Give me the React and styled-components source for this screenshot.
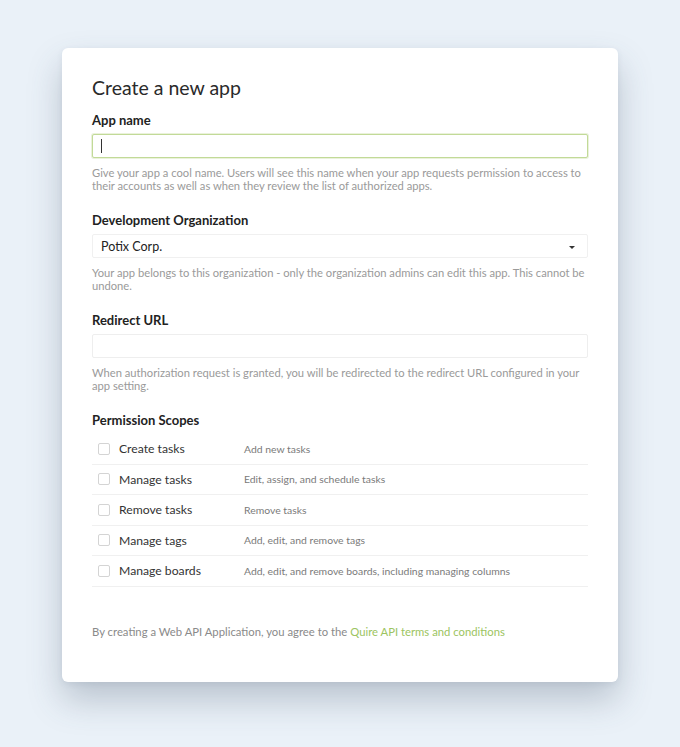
import React from 'react';
import styled, { createGlobalStyle } from 'styled-components';

const scopes = [
  { name: 'Create tasks', desc: 'Add new tasks' },
  { name: 'Manage tasks', desc: 'Edit, assign, and schedule tasks' },
  { name: 'Remove tasks', desc: 'Remove tasks' },
  { name: 'Manage tags', desc: 'Add, edit, and remove tags' },
  { name: 'Manage boards', desc: 'Add, edit, and remove boards, including managing columns' },
];

export default function App() {
  return (
    <>
      <GlobalStyle />
      <Page>
        <Card>
          <Title>Create a new app</Title>

          <Field>
            <Label htmlFor="appName">App name</Label>
            <InputWrap>
              <TextInput id="appName" type="text" $focused />
              <Caret />
            </InputWrap>
            <Help>
              Give your app a cool name. Users will see this name when your app requests permission to access to
              their accounts as well as when they review the list of authorized apps.
            </Help>
          </Field>

          <Field>
            <Label>Development Organization</Label>
            <Select>
              <span>Potix Corp.</span>
              <Arrow />
            </Select>
            <Help>
              Your app belongs to this organization - only the organization admins can edit this app. This cannot be
              undone.
            </Help>
          </Field>

          <Field>
            <Label htmlFor="redirect">Redirect URL</Label>
            <TextInput id="redirect" type="text" />
            <Help>
              When authorization request is granted, you will be redirected to the redirect URL configured in your
              app setting.
            </Help>
          </Field>

          <Field>
            <Label>Permission Scopes</Label>
            <ScopeList>
              {scopes.map((s) => (
                <ScopeRow key={s.name}>
                  <Check />
                  <ScopeName>{s.name}</ScopeName>
                  <ScopeDesc>{s.desc}</ScopeDesc>
                </ScopeRow>
              ))}
            </ScopeList>
          </Field>

          <Footer>
            By creating a Web API Application, you agree to the <Link href="#">Quire API terms and conditions</Link>
          </Footer>
        </Card>
      </Page>
    </>
  );
}

const GlobalStyle = createGlobalStyle`
  html, body {
    margin: 0;
    padding: 0;
    background: #eaf1f8;
  }
  body {
    font-family: Lato, "Open Sans", sans-serif;
    color: #333;
  }
  * {
    box-sizing: border-box;
  }
`;

const Page = styled.main`
  min-height: 747px;
  padding-top: 48px;
  display: flex;
  justify-content: center;
  align-items: flex-start;
`;

const Card = styled.section`
  width: 556px;
  background: #fff;
  border-radius: 6px;
  padding: 28px 30px 43px;
  box-shadow: 0 18px 34px rgba(60, 80, 100, 0.28), 0 2px 6px rgba(60, 80, 100, 0.08);
`;

const Title = styled.h1`
  margin: 0;
  font-size: 19.5px;
  line-height: 24px;
  font-weight: 400;
  color: #2a2a2a;
`;

const Field = styled.div`
  display: flex;
  flex-direction: column;
  margin-top: 12px;

  & + & {
    margin-top: 20px;
  }
`;

const Label = styled.label`
  font-size: 13px;
  line-height: 16px;
  font-weight: 700;
  color: #222;
  margin-bottom: 6px;
`;

const InputWrap = styled.div`
  position: relative;
`;

const TextInput = styled.input`
  width: 100%;
  height: 24px;
  border: 1px solid ${(p) => (p.$focused ? '#c2da98' : '#eeeeee')};
  border-radius: 2px;
  outline: none;
  padding: 0 8px;
  font-family: inherit;
  font-size: 12px;
  caret-color: transparent;
  box-shadow: ${(p) => (p.$focused ? '0 0 0 1px rgba(194, 218, 152, 0.35)' : 'none')};
`;

const Caret = styled.span`
  position: absolute;
  left: 9px;
  top: 5px;
  width: 1px;
  height: 14px;
  background: #333;
`;

const Select = styled.div`
  height: 24px;
  border: 1px solid #f0f0f0;
  border-radius: 2px;
  display: flex;
  align-items: center;
  justify-content: space-between;
  padding: 0 12px 0 8px;
  font-size: 12.5px;
  color: #222;
`;

const Arrow = styled.span`
  width: 0;
  height: 0;
  margin-top: 2px;
  border-left: 3.5px solid transparent;
  border-right: 3.5px solid transparent;
  border-top: 3.5px solid #333;
`;

const Help = styled.p`
  margin: 8px 0 0;
  font-size: 11.2px;
  line-height: 13px;
  color: #9a9a9a;
`;

const ScopeList = styled.ul`
  list-style: none;
  margin: 0;
  padding: 0;
`;

const ScopeRow = styled.li`
  height: 30.5px;
  display: flex;
  align-items: center;
  border-bottom: 1px solid #f0f0f0;
  padding-left: 6px;
`;

const Check = styled.span`
  width: 12px;
  height: 12px;
  border: 1px solid #d4d4d4;
  border-radius: 2px;
  flex-shrink: 0;
  margin-right: 9px;
`;

const ScopeName = styled.span`
  width: 125px;
  font-size: 12.2px;
  color: #333;
`;

const ScopeDesc = styled.span`
  font-size: 10.4px;
  color: #7a7a7a;
`;

const Footer = styled.p`
  margin: 38px 0 0;
  font-size: 11.3px;
  line-height: 14px;
  color: #8a8a8a;
`;

const Link = styled.a`
  color: #9cc461;
  text-decoration: none;
`;
